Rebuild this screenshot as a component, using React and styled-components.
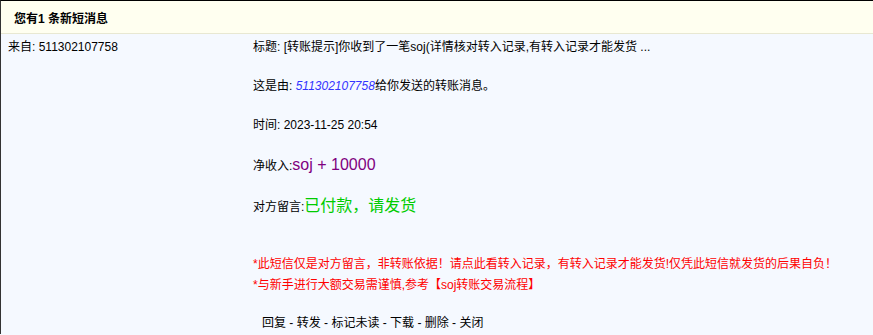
import React from "react";
import styled, { createGlobalStyle } from "styled-components";

const GlobalStyle = createGlobalStyle`
  html, body {
    margin: 0;
    padding: 0;
    background: #f5f9ff;
  }
  body {
    font-family: "Liberation Sans", Arial, "Noto Sans CJK SC", sans-serif;
    font-size: 12px;
    color: #000;
  }
`;

const Box = styled.div`
  border-top: 1px solid #000;
  border-left: 1px solid #333;
  min-height: 334px;
  box-sizing: border-box;
  background: #f5f9ff;
`;

const Header = styled.div`
  height: 32px;
  display: flex;
  align-items: center;
  padding-left: 13px;
  background: #fffff0;
  border-bottom: 1px solid #e8e8d2;
  font-weight: 700;
  font-size: 12px;
`;

const Row = styled.div`
  display: grid;
  grid-template-columns: 252px 1fr;
  padding-top: 3px;
`;

const FromCell = styled.div`
  padding-left: 7px;
  line-height: 20px;
`;

const Body = styled.div`
  display: flex;
  flex-direction: column;
`;

const Line = styled.div`
  line-height: ${(p) => p.$h || 20}px;
  margin-top: ${(p) => p.$gap ?? 19}px;
  white-space: nowrap;
  color: ${(p) => p.$color || "#000"};
  padding-left: ${(p) => p.$indent || 0}px;
`;

const Sender = styled.span`
  color: #3333ff;
  font-style: italic;
`;

const Big = styled.span`
  font-size: 16px;
  color: ${(p) => p.$color};
`;

const Action = styled.a`
  color: #000;
  text-decoration: none;
  cursor: pointer;
`;

const actions = ["回复", "转发", "标记未读", "下载", "删除", "关闭"];

export default function App() {
  return (
    <>
      <GlobalStyle />
      <Box>
        <Header>您有1 条新短消息</Header>
        <Row>
          <FromCell>来自: 511302107758</FromCell>
          <Body>
            <Line $gap={0}>
              标题: [转账提示]你收到了一笔soj(详情核对转入记录,有转入记录才能发货 ...
            </Line>
            <Line>
              这是由: <Sender>511302107758</Sender>给你发送的转账消息。
            </Line>
            <Line>时间: 2023-11-25 20:54</Line>
            <Line $gap={20}>
              净收入:<Big $color="#800080">soj + 10000</Big>
            </Line>
            <Line $gap={20}>
              对方留言:<Big $color="#00cc00">已付款，请发货</Big>
            </Line>
            <Line $gap={37} $h={21} $color="#ff0000">
              *此短信仅是对方留言，非转账依据！请点此看转入记录，有转入记录才能发货!仅凭此短信就发货的后果自负！
            </Line>
            <Line $gap={0} $h={21} $color="#ff0000">
              *与新手进行大额交易需谨慎,参考【soj转账交易流程】
            </Line>
            <Line $gap={17} $indent={9}>
              {actions.map((a, i) => (
                <React.Fragment key={a}>
                  {i > 0 && " - "}
                  <Action>{a}</Action>
                </React.Fragment>
              ))}
            </Line>
          </Body>
        </Row>
      </Box>
    </>
  );
}
